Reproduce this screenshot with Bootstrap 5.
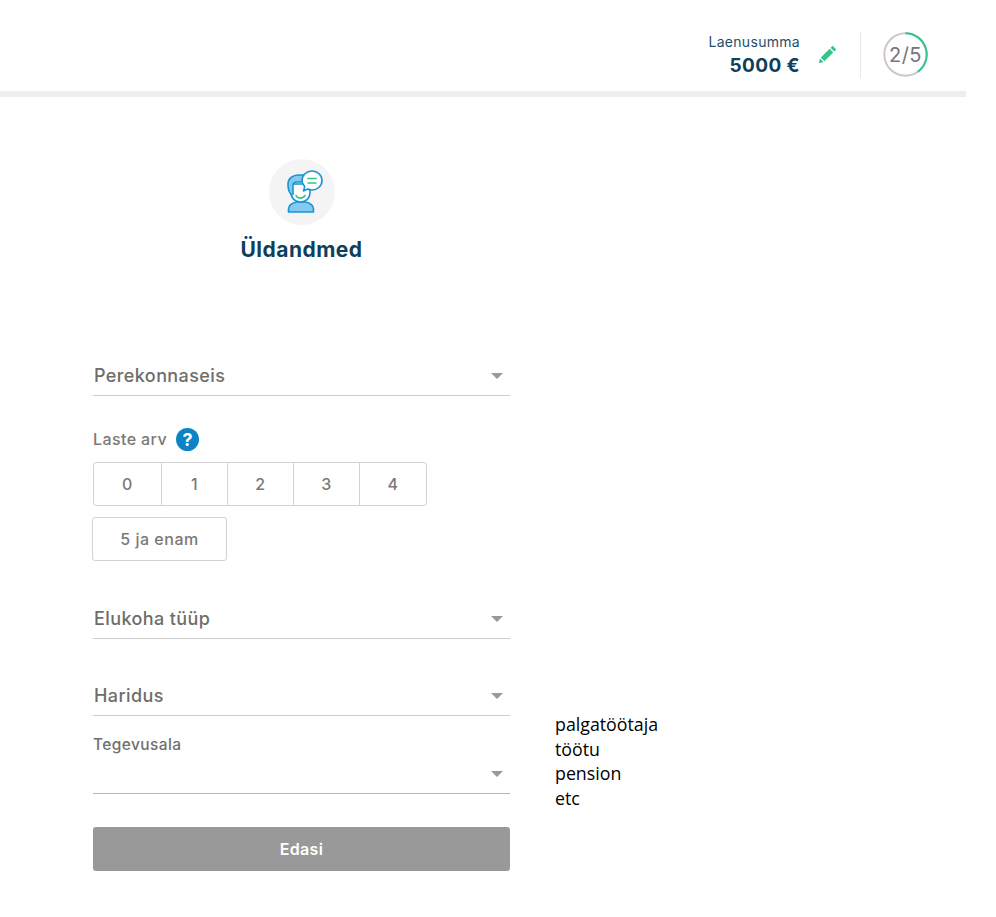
<!DOCTYPE html>
<html lang="et"><head><meta charset="utf-8"><title>Üldandmed</title>
<link rel="stylesheet" href="https://cdn.jsdelivr.net/npm/bootstrap@5.3.0/dist/css/bootstrap.min.css">
<style>
body{font-family:Inter,"Liberation Sans",sans-serif;background:#fff;color:#706e6a;overflow:hidden}
.pg{width:966px}
.topbar{height:97px;border-bottom:6px solid #eee;padding-right:38px;padding-top:18px}
.loan-box{padding-top:2px}
.loan-lbl{font-size:14px;line-height:16px;color:#1f4f69;margin-top:1px;letter-spacing:.3px}
.loan-val{font-size:19px;line-height:24px;font-weight:700;color:#0e3f5c;margin-top:4px;letter-spacing:.4px}
.pencil{margin:0 23px 0 18px}
.vsep{width:1px;height:46px;background:#e8e8e8;margin-right:22px}
.ring{width:45px;height:45px}
.ring text{font-family:Inter,sans-serif;font-size:20px;letter-spacing:.5px;fill:#77757a}
.formcol{width:417px;margin-left:93px}
.avatar{width:66px;height:66px;border-radius:50%;background:#f4f4f4;margin-top:62px}
.ttl{font-size:21px;line-height:26px;font-weight:700;letter-spacing:.5px;color:#0e3f5c;margin-top:12px;margin-bottom:97px}
.pick{border-bottom:1px solid #ccc;font-size:18px;font-weight:500;letter-spacing:.4px;color:#6f6d68;height:36px;padding:0 7px 4px 1px;line-height:26px}
.pick.darker{border-bottom-color:#b5b5b5}
.caret{width:0;height:0;border-left:6px solid transparent;border-right:6px solid transparent;border-top:6px solid #999}
.lbl{font-size:16px;font-weight:500;line-height:24px;letter-spacing:.4px;color:#7b7976}
.help{width:23px;height:23px;border-radius:50%;background:#0a84c6;color:#fff;font-size:18px;font-weight:700;line-height:23px;text-align:center;margin-left:9px;letter-spacing:0}
.opt{height:44px;border:1px solid #d3d3d3;background:#fff;color:#7b7976;font-size:16px;font-weight:500;letter-spacing:.5px;display:flex;align-items:center;justify-content:center;margin-left:-1px}
.opt:first-child{margin-left:0;border-radius:3px 0 0 3px;width:69px}
.opt:last-child{border-radius:0 3px 3px 0;width:68px}
.opt-n{width:67px}
.opt-w{width:135px;margin-left:-1px;border-radius:3px;margin-top:11px}
.tg{font-size:15.5px;font-weight:500;letter-spacing:.4px;color:#716f6b;line-height:20px;margin-top:19px}
.go{display:block;width:100%;height:44px;background:#999;color:#fff;font-size:16px;font-weight:600;letter-spacing:.3px;border:0;border-radius:3px;margin-top:33px}
.notes{font-family:"Open Sans",sans-serif;font-size:17.8px;line-height:24.5px;color:#000;margin-left:45px;margin-bottom:61px}
</style></head><body>
<div class="pg">
<header class="topbar d-flex justify-content-end align-items-center">
  <div class="text-end loan-box"><div class="loan-lbl">Laenusumma</div><div class="loan-val">5000 €</div></div>
  <svg class="pencil" width="19" height="19" viewBox="0 0 19 19"><path fill="#35c48a" d="M14.6 .8l3.6 3.6-2 2-3.600-3.600zM11.600 3.800l3.600 3.600-8.800 8.800-3.600-3.600zM2 13.500l3.500 3.500-4.700 1.200z"/></svg>
  <div class="vsep"></div>
  <svg class="ring" viewBox="0 0 45 45">
    <circle cx="22.500" cy="22.500" r="21.200" fill="none" stroke="#c9c9c9" stroke-width="2"/>
    <path d="M22.500 1.300A21.200 21.200 0 0 1 35 39.600" fill="none" stroke="#35c48a" stroke-width="2"/>
    <text x="22.500" y="29.500" text-anchor="middle">2/5</text>
  </svg>
</header>
<div class="d-flex">
<main class="formcol">
  <div class="d-flex flex-column align-items-center">
    <div class="avatar d-flex align-items-center justify-content-center">
      <svg width="48" height="52" viewBox="0 0 48 52" fill="none" stroke="#1a93d3" stroke-width="1.600" stroke-linejoin="round" stroke-linecap="round">
        <path d="M10.500 46v-3c0-4 4-6 8-7h9c4 1 8 3 8 7v3z" fill="#86c9ee"/>
        <path d="M13 18v9c0 5 4 9 9.500 9s9.500-4 9.500-9v-9z" fill="#fff"/>
        <path d="M13.500 29C10.500 26 10 22 10 18 10 12.500 15 9 20 9h8v7h-9c-2 0-4 1-4 3v9z" fill="#86c9ee"/>
        <path d="M18 29.500c1.500 3.500 7 3.500 9 0" stroke="#35c48a"/>
        <path d="M34 5c5.500 0 10 4.200 10 9.500S39.500 24 34 24c-1.500 0-3-.3-4.300-.9L25.500 25l1.200-4.500C25 18.900 24 16.800 24 14.500 24 9.200 28.500 5 34 5z" fill="#fff"/>
        <path d="M30 12.500h8M30 17h8" stroke="#35c48a"/>
      </svg>
    </div>
    <div class="ttl">Üldandmed</div>
  </div>
  <div class="pick d-flex justify-content-between align-items-center"><span>Perekonnaseis</span><span class="caret"></span></div>
  <div class="d-flex align-items-center lbl" style="margin-top:31px"><span>Laste arv</span><span class="help">?</span></div>
  <div class="d-flex" style="margin-top:11px">
    <div class="opt opt-n">0</div><div class="opt opt-n">1</div><div class="opt opt-n">2</div><div class="opt opt-n">3</div><div class="opt opt-n">4</div>
  </div>
  <div class="opt opt-w">5 ja enam</div>
  <div class="pick d-flex justify-content-between align-items-center" style="margin-top:42px"><span>Elukoha tüüp</span><span class="caret"></span></div>
  <div class="pick d-flex justify-content-between align-items-center" style="margin-top:42px;height:35px"><span>Haridus</span><span class="caret"></span></div>
  <div class="tg">Tegevusala</div>
  <div class="pick darker d-flex justify-content-end align-items-center" style="margin-top:4px;height:35px"><span class="caret"></span></div>
  <button class="go" type="button">Edasi</button>
</main>
<aside class="notes align-self-end"><div>palgatöötaja</div><div>töötu</div><div>pension</div><div>etc</div></aside>
</div>
</div>
</body></html>
